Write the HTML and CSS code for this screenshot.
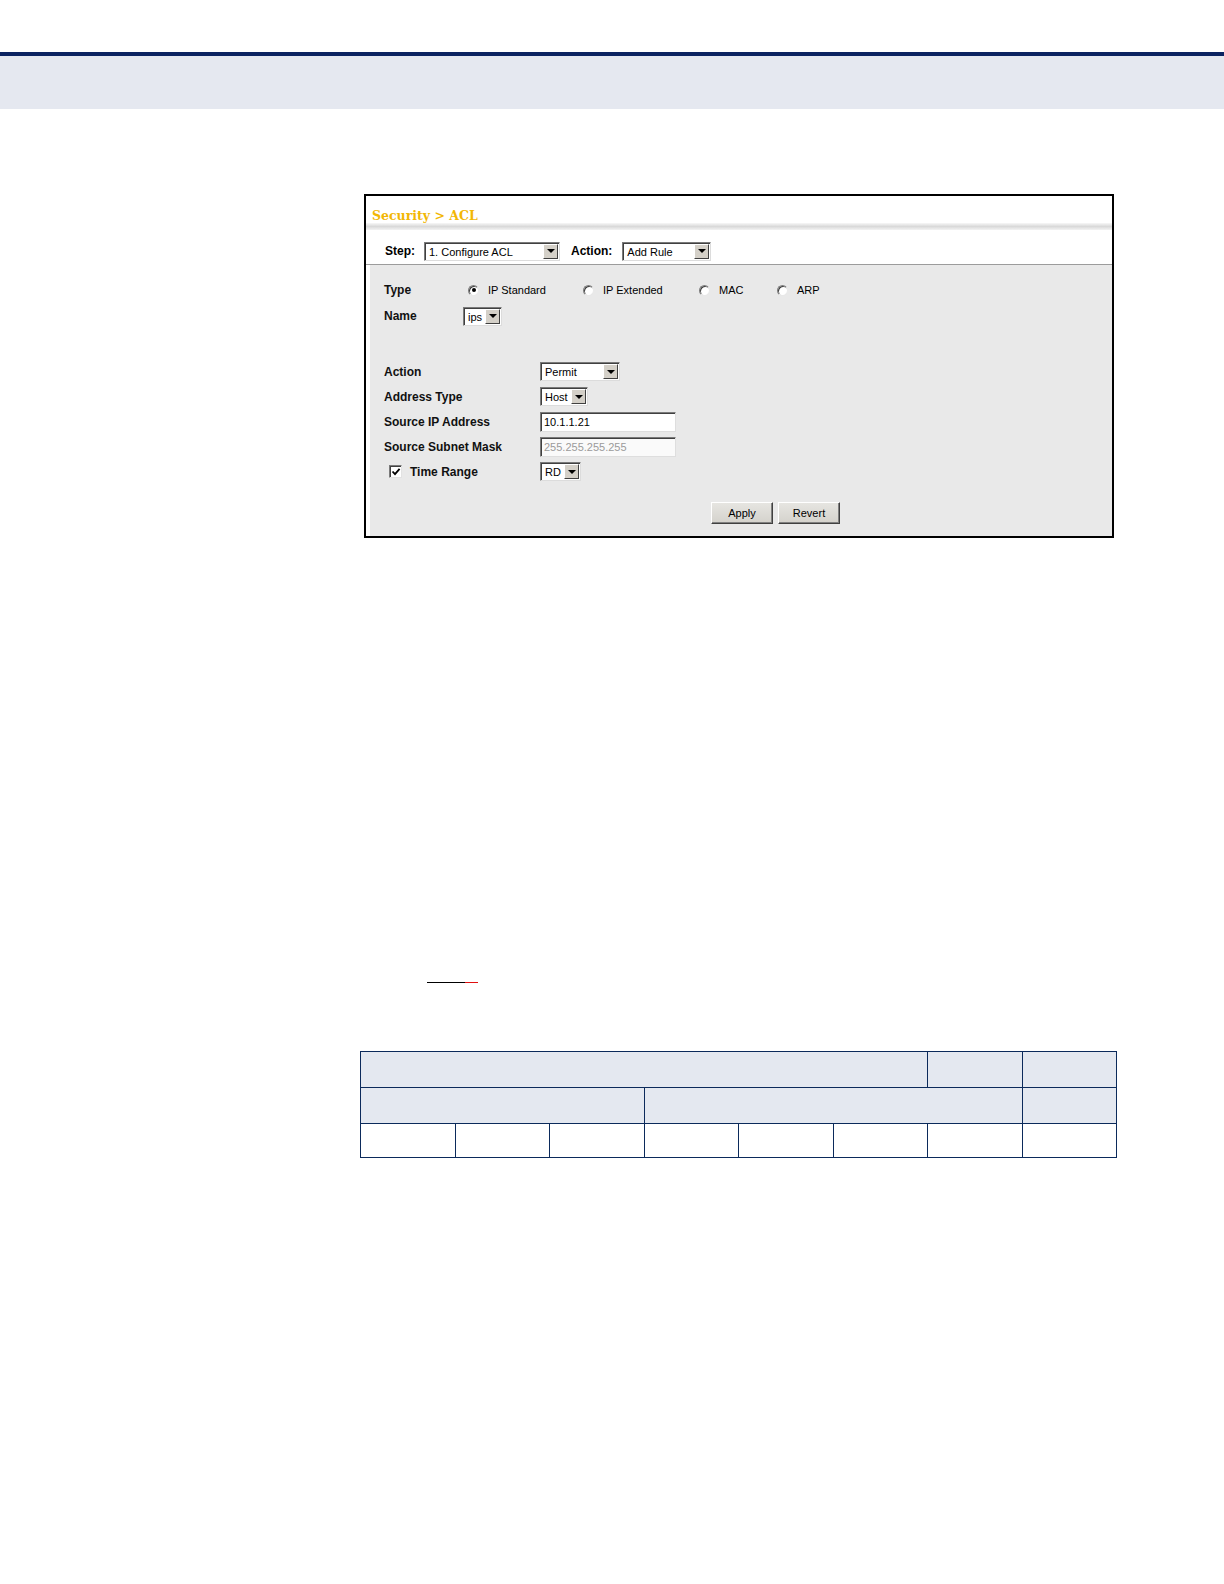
FILE: index.html
```html
<!DOCTYPE html>
<html lang="en">
<head>
    <meta charset="UTF-8">
    <title>Security &gt; ACL</title>
    <link rel="stylesheet" href="styles.css">
</head>
<body>

    <div class="page-head"></div>

    <div class="content">

        <div class="acl-box">
            <div class="acl-title">Security &gt; ACL</div>
            <div class="acl-title-rule"></div>

            <div class="step-row">
                <span class="step-label">Step:</span>
                <span class="dropdown dd-step"><span class="dd-value">1. Configure ACL</span><span class="dd-arrow"></span></span>
                <span class="step-label action-label">Action:</span>
                <span class="dropdown dd-rule"><span class="dd-value">Add Rule</span><span class="dd-arrow"></span></span>
            </div>

            <div class="acl-body">
                <div class="top-grid">
                    <span class="label">Type</span>
                    <div class="radio-group">
                        <label class="option opt-std"><span class="radio checked"></span>IP Standard</label>
                        <label class="option opt-ext"><span class="radio"></span>IP Extended</label>
                        <label class="option opt-mac"><span class="radio"></span>MAC</label>
                        <label class="option"><span class="radio"></span>ARP</label>
                    </div>

                    <span class="label">Name</span>
                    <div><span class="dropdown dd-name"><span class="dd-value">ips</span><span class="dd-arrow"></span></span></div>
                </div>

                <div class="rule-grid">
                    <span class="label">Action</span>
                    <div><span class="dropdown dd-permit"><span class="dd-value">Permit</span><span class="dd-arrow"></span></span></div>

                    <span class="label">Address Type</span>
                    <div><span class="dropdown dd-host"><span class="dd-value">Host</span><span class="dd-arrow"></span></span></div>

                    <span class="label">Source IP Address</span>
                    <div><span class="field">10.1.1.21</span></div>

                    <span class="label">Source Subnet Mask</span>
                    <div><span class="field disabled">255.255.255.255</span></div>

                    <span class="label check-label">
                        <span class="checkbox">
                            <svg width="10" height="10" viewBox="0 0 10 10"><path d="M1.5 4.5 L4 7.2 L8.6 1.8" fill="none" stroke="#000" stroke-width="1.8"/></svg>
                        </span>
                        Time Range
                    </span>
                    <div><span class="dropdown dd-rd"><span class="dd-value">RD</span><span class="dd-arrow"></span></span></div>
                </div>

                <div class="button-row">
                    <button class="btn">Apply</button>
                    <button class="btn">Revert</button>
                </div>
            </div>
        </div>

        <div class="link-mark"><span class="mark-black"></span><span class="mark-red"></span></div>

        <table class="grid-table">
            <tr class="head-row">
                <td colspan="6"></td>
                <td></td>
                <td></td>
            </tr>
            <tr class="head-row">
                <td colspan="3"></td>
                <td colspan="4"></td>
                <td></td>
            </tr>
            <tr class="body-row">
                <td></td><td></td><td></td><td></td><td></td><td></td><td></td><td></td>
            </tr>
        </table>

    </div>

</body>
</html>
```

FILE: styles.css
```css
body {
    margin: 0;
    background-color: #fff;
    font-family: 'Liberation Sans', Arial, sans-serif;
    color: #000;
}

.page-head {
    margin-top: 52px;
    height: 53px;
    border-top: 4px solid #0b2361;
    background-color: #e5e8f0;
}

.content {
    margin-left: 360px;
    width: 757px;
    padding-top: 85px;
}

/* ACL window */
.acl-box {
    margin-left: 4px;
    width: 750px;
    height: 344px;
    box-sizing: border-box;
    border: 2px solid #000;
    background-color: #fff;
}

.acl-title {
    height: 27px;
    box-sizing: border-box;
    padding: 13px 0 0 6px;
    line-height: 14px;
    font-family: 'DejaVu Serif', 'Liberation Serif', serif;
    font-weight: bold;
    font-size: 12.5px;
    color: #f2b705;
}

.acl-title-rule {
    height: 7px;
    background: linear-gradient(to bottom, #f7f7f7 0%, #d9d9d9 50%, #f3f3f3 100%);
}

.step-row {
    height: 35px;
    box-sizing: border-box;
    padding: 8px 0 0 19px;
    border-bottom: 1px solid #9c9c9c;
    display: flex;
    align-items: center;
}

.step-label {
    font-weight: bold;
    font-size: 12px;
    margin-right: 9px;
}

.action-label {
    margin-left: 11px;
    margin-right: 10px;
}

.acl-body {
    margin-left: 4px;
    height: 271px;
    box-sizing: border-box;
    padding: 12px 0 0 14px;
    background-color: #e9e9e9;
}

.label {
    font-weight: bold;
    font-size: 12px;
    color: #111;
}

.top-grid {
    display: grid;
    grid-template-columns: 79px auto;
    grid-auto-rows: 26px;
    align-items: center;
}

.rule-grid {
    margin-top: 30px;
    display: grid;
    grid-template-columns: 156px auto;
    grid-auto-rows: 25px;
    align-items: center;
}

.radio-group {
    display: flex;
    align-items: center;
    font-size: 11px;
}

.option {
    display: flex;
    align-items: center;
    gap: 9px;
}

.opt-std { width: 115px; padding-left: 5px; }
.opt-ext { width: 116px; }
.opt-mac { width: 78px; }

.radio {
    width: 11px;
    height: 11px;
    box-sizing: border-box;
    border-radius: 50%;
    border: 1px solid;
    border-color: #7d7d7d #e8e8e8 #e8e8e8 #7d7d7d;
    background-color: #fff;
    box-shadow: inset 1px 1px 0 #404040;
    display: flex;
    align-items: center;
    justify-content: center;
}

.radio.checked::after {
    content: '';
    width: 4px;
    height: 4px;
    border-radius: 50%;
    background-color: #000;
}

/* select boxes */
.dropdown {
    display: inline-flex;
    height: 19px;
    box-sizing: border-box;
    border: 1px solid;
    border-color: #7a7a7a #dcdcdc #dcdcdc #7a7a7a;
    box-shadow: inset 1px 1px 0 #404040;
    background-color: #fff;
    font-size: 11px;
    font-weight: normal;
    vertical-align: middle;
}

.dd-value {
    flex: 1;
    padding: 1px 0 0 4px;
    line-height: 16px;
    white-space: nowrap;
}

.dd-arrow {
    width: 15px;
    margin: 1px 1px 1px 0;
    box-sizing: border-box;
    border: 1px solid;
    border-color: #fff #404040 #404040 #fff;
    background-color: #d4d0c8;
    display: flex;
    align-items: center;
    justify-content: center;
}

.dd-arrow::after {
    content: '';
    border-left: 4px solid transparent;
    border-right: 4px solid transparent;
    border-top: 4px solid #000;
}

.dd-step { width: 136px; }
.dd-rule { width: 89px; }
.dd-name { width: 39px; }
.dd-permit { width: 80px; }
.dd-host { width: 48px; }
.dd-rd { width: 41px; }

/* text fields */
.field {
    display: inline-block;
    width: 136px;
    height: 20px;
    box-sizing: border-box;
    padding: 2px 0 0 3px;
    border: 1px solid;
    border-color: #7a7a7a #dedede #dedede #7a7a7a;
    box-shadow: inset 1px 1px 0 #404040;
    background-color: #fff;
    font-size: 11px;
    line-height: 15px;
    vertical-align: middle;
}

.field.disabled {
    color: #9a9a9a;
    background-color: #fafafa;
}

.check-label {
    display: flex;
    align-items: center;
    gap: 8px;
    padding-left: 5px;
}

.checkbox {
    width: 13px;
    height: 13px;
    box-sizing: border-box;
    border: 1px solid;
    border-color: #7a7a7a #e2e2e2 #e2e2e2 #7a7a7a;
    box-shadow: inset 1px 1px 0 #404040;
    background-color: #fff;
    display: flex;
    align-items: center;
    justify-content: center;
}

.checkbox svg {
    display: block;
}

.button-row {
    margin-top: 18px;
    padding-left: 327px;
    display: flex;
    gap: 5px;
}

.btn {
    width: 62px;
    height: 22px;
    padding: 0;
    border: 1px solid;
    border-color: #fff #404040 #404040 #fff;
    box-shadow: inset -1px -1px 0 #808080;
    background: linear-gradient(to bottom, #e6e5e1, #d4d2cc);
    font-family: 'Liberation Sans', Arial, sans-serif;
    font-size: 11px;
    color: #000;
}

/* stray link underline */
.link-mark {
    margin: 444px 0 0 67px;
    display: flex;
    height: 1px;
}

.mark-black {
    width: 38px;
    background-color: #000;
}

.mark-red {
    width: 13px;
    background-color: #e01010;
}

/* empty table */
.grid-table {
    margin-top: 68px;
    width: 757px;
    border-collapse: collapse;
    table-layout: fixed;
}

.grid-table td {
    border: 1px solid #0b2a5b;
    padding: 0;
}

.head-row {
    height: 36px;
    background-color: #e4e8f0;
}

.body-row {
    height: 34px;
    background-color: #fff;
}
```
